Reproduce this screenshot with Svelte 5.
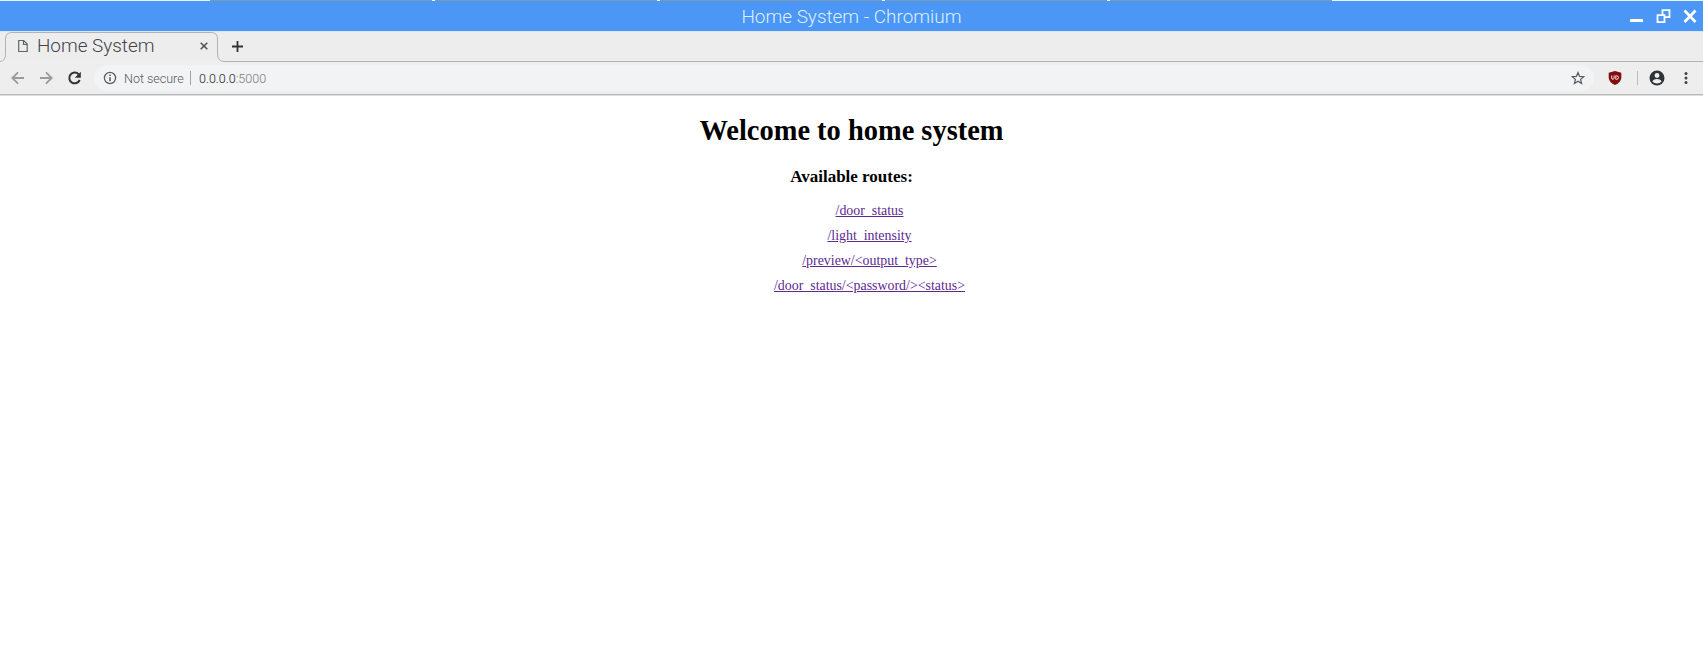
<script>
  const windows = [1, 2, 3, 4, 5];
  const routes = [
    '/door_status',
    '/light_intensity',
    '/preview/<output_type>',
    '/door_status/<password/><status>'
  ];
</script>

<div class="window">
  <div class="desktop-edge">
    {#each windows as id (id)}<span></span>{/each}
  </div>

  <header class="titlebar">
    <div class="title">Home System - Chromium</div>
    <svg class="window-controls" width="72" height="30" viewBox="0 0 72 30" fill="none" stroke="#fff">
      <path d="M0 19.500h13" stroke-width="3" />
      <path d="M27.500 14.200h7v7h-7z M32.500 14v-4.800h7v7h-5" stroke-width="1.800" />
      <path d="M54.500 9.500l11 11.500M65.500 9.500l-11 11.500" stroke-width="2.700" />
    </svg>
  </header>

  <nav class="tabs">
    <svg class="outline" width="230" height="30" viewBox="0 0 230 30" fill="none" stroke="#b3b3b3">
      <path d="M0 29.500C4 29 5.500 26 5.500 22V7Q5.500 .5 12 .5H211Q217.500 .5 217.500 7V22Q217.500 29.500 225 29.500H230" />
    </svg>
    <div class="tab">
      <svg width="10" height="14" viewBox="0 0 10 14" fill="none" stroke="#606468" stroke-width="1.200">
        <path d="M.7 1.500h5l3.500 3.500v7.500H.7zM5.500 1.500v4h3.700" />
      </svg>
      <span class="tab-title">Home System</span>
      <svg class="close" width="8" height="8" viewBox="0 0 8 8" stroke="#505457" stroke-width="1.600">
        <path d="M.7.7l6.600 6.600M7.300.7L.7 7.300" />
      </svg>
    </div>
    <svg class="new-tab" width="11" height="11" viewBox="0 0 11 11" stroke="#303235" stroke-width="1.800">
      <path d="M0 5.500h11M5.500 0v11" />
    </svg>
  </nav>

  <div class="toolbar">
    <svg class="history" width="72" height="16" viewBox="0 0 72 16" fill="none" stroke-width="1.800">
      <path d="M13 8H1.500M7 2.300L1.300 8 7 13.700" stroke="#9a9b9d" />
      <path d="M29 8h11.500M35 2.300L40.700 8 35 13.700" stroke="#9a9b9d" />
      <path d="M67.600 4.200A5.400 5.400 0 1 0 68.700 10" stroke="#303336" stroke-width="2" />
      <path d="M69.800 1.800v6h-6z" fill="#303336" />
    </svg>
    <div class="omnibox">
      <svg width="14" height="14" viewBox="0 0 14 14" fill="none" stroke="#5a5e62" stroke-width="1.300">
        <circle cx="7" cy="7" r="5.600" />
        <path d="M7 6.300v4M7 3.500v1.500" stroke-width="1.600" />
      </svg>
      <span class="security">Not secure</span>
      <span class="divider"></span>
      <span class="host">0.0.0.0<span class="port">:5000</span></span>
      <svg class="star" width="14" height="14" viewBox="0 0 14 14" fill="none" stroke="#55595d" stroke-width="1.200">
        <path d="M7 1.500l1.600 3.900 4.200.300-3.200 2.700 1 4.100L7 10.300 3.400 12.500l1-4.100L1.200 5.700l4.200-.300z" />
      </svg>
    </div>
    <div class="actions">
      <svg width="14" height="16" viewBox="0 0 14 16">
        <path d="M7 1L13.300 2.800V8Q12.800 12.500 7 15 1.200 12.500 .7 8V2.800z" fill="#820c0e" />
        <path d="M3.700 5.500v2.500q0 1.300 1.200 1.300T6.100 8V5.500M7.800 5.500v3.800h.8q1.900 0 1.900-1.800T8.600 5.900z" fill="none" stroke="#f3dede" />
      </svg>
      <span class="separator"></span>
      <svg class="profile" width="16" height="16" viewBox="0 0 16 16">
        <circle cx="8" cy="8" r="7.500" fill="#303336" />
        <circle cx="8" cy="5.500" r="2.400" fill="#eee" />
        <path d="M3.300 11.200Q4.700 9.100 8 9.100t4.700 2.100Q11.200 13.400 8 13.400t-4.700-2.200" fill="#eee" />
      </svg>
      <svg class="menu" width="4" height="14" viewBox="0 0 4 14" fill="#404346">
        <circle cx="2" cy="2.500" r="1.500" /><circle cx="2" cy="7" r="1.500" /><circle cx="2" cy="11.500" r="1.500" />
      </svg>
    </div>
  </div>

  <main>
    <h1>Welcome to home system</h1>
    <h3>Available routes:</h3>
    <ul>
      {#each routes as route (route)}
        <li><a href="#route">{route}</a></li>
      {/each}
    </ul>
  </main>
</div>

<style>
  :global(body) { margin: 0; background: #fff; }
  .window { height: 666px; overflow: hidden; font-family: Roboto, sans-serif; }
  svg { display: block; flex: none; }
  .desktop-edge { height: 1px; display: flex; gap: 3px; padding-left: 210px; background: #e3f8fc; }
  .desktop-edge span { width: 222px; background: #789caf; }
  .titlebar { height: 30px; display: grid; grid-template-columns: 1fr; align-items: center; background: #4c97f5; border-bottom: 1px solid #dce7f5; }
  .title, .window-controls { grid-area: 1 / 1; }
  .title { color: #dcf0ff; font-size: 18.950px; line-height: 32px; height: 30px; font-weight: 300; text-align: center; }
  .window-controls { justify-self: end; margin-right: 1px; }
  .tabs { height: 30px; display: grid; grid-template-columns: 218px 12px 1fr; align-items: center; background: linear-gradient(#b3b3b3, #b3b3b3) 225px 29px no-repeat, #ededed; }
  .outline { grid-area: 1 / 1 / 2 / 3; }
  .tab { grid-area: 1 / 1; display: flex; align-items: center; height: 28px; align-self: start; padding-left: 18px; }
  .tab-title { margin-left: 9px; width: 163px; font-size: 18.900px; line-height: 28px; font-weight: 300; color: #404448; white-space: nowrap; }
  .new-tab { grid-area: 1 / 2 / 2 / 4; align-self: start; margin: 9px 0 0 14px; }
  .toolbar { height: 32px; display: flex; align-items: center; padding-left: 11px; border-bottom: 1px solid #b8b8b8; background: #eee; box-shadow: 0 1px #dedede; }
  .omnibox { width: 1500px; height: 26px; border-radius: 13px; background: #f1f3f4; margin-left: 11px; display: flex; align-items: center; font-size: 12.500px; }
  .omnibox > svg:first-child { margin-left: 9px; }
  .security { margin-left: 7px; width: 60px; line-height: 14px; padding-top: 2px; white-space: nowrap; font-weight: 300; color: #55595d; }
  .divider { width: 1px; height: 14px; background: #a0a2a4; margin: 0 8px 0 6px; }
  .host { font-weight: 300; line-height: 14px; padding-top: 2px; color: #202224; }
  .port { color: #777b80; }
  .star { margin-left: auto; margin-right: 9px; }
  .actions { display: flex; align-items: center; margin-left: 14px; }
  .separator { width: 1px; height: 14px; background: #bbb; margin: 0 11px 0 15px; }
  .menu { margin-left: 19px; }
  main { font-family: "Liberation Serif", serif; text-align: center; color: #000; padding-top: 18px; }
  h1 { margin: 0; font-size: 28.450px; line-height: 36px; }
  h3 { margin: 18px 0 0; font-size: 17px; line-height: 20px; }
  ul { margin: 11px 0 0; padding: 0 0 0 36px; list-style: none; font-size: 13.900px; }
  li { height: 25px; line-height: 25px; }
  a { color: #5c2a91; text-decoration: underline; }
</style>
